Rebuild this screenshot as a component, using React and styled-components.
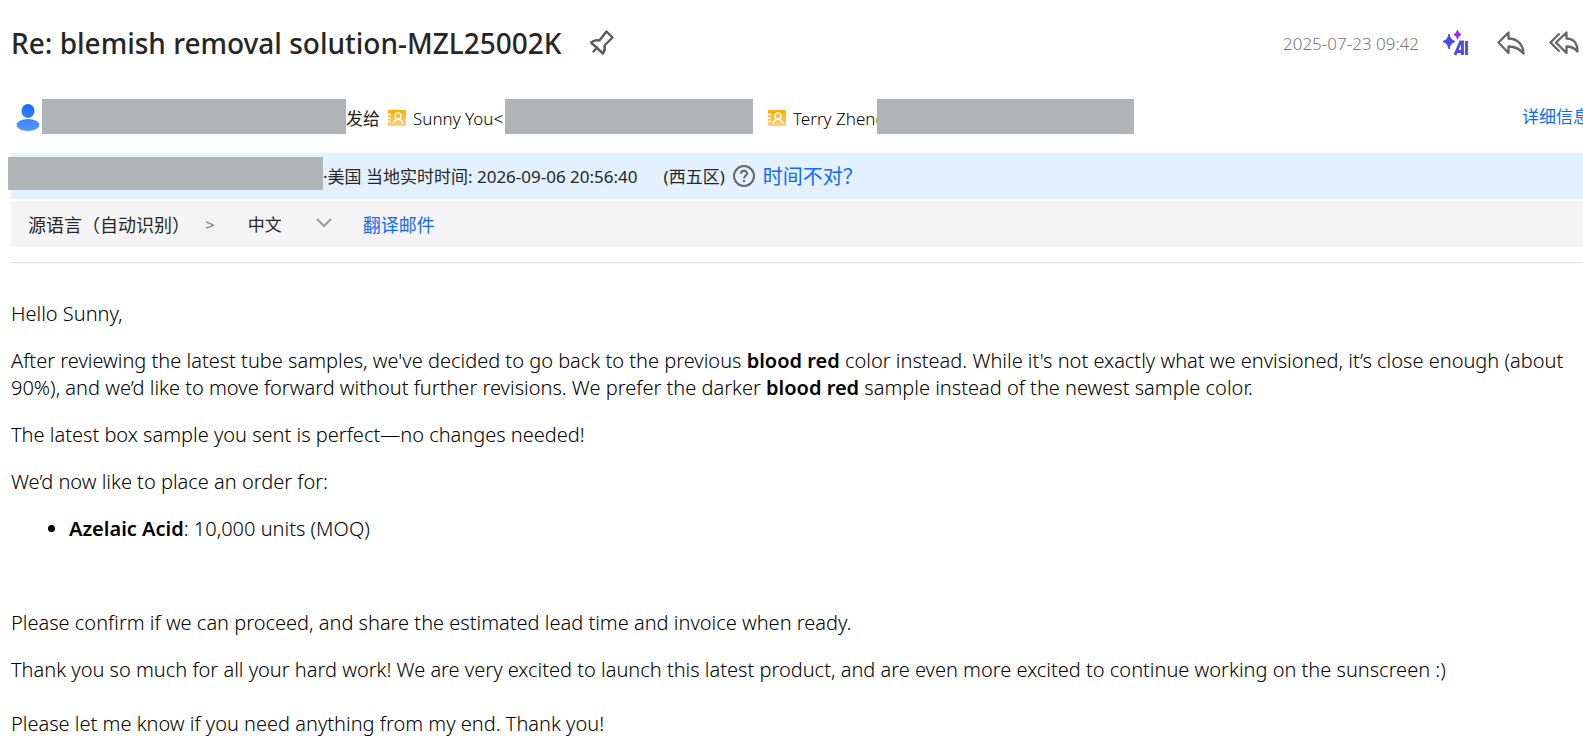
import React, { useState } from "react";
import styled, { createGlobalStyle } from "styled-components";

const App = () => {
    const [language, setLanguage] = useState("zh");

    return (
        <>
            <GlobalStyle />
            <StMail>
                <StHeader>
                    <StTitle>Re: blemish removal solution-MZL25002K</StTitle>
                    <StIconButton aria-label="置顶">
                        <PinIcon />
                    </StIconButton>
                    <StActions>
                        <StDate>2025-07-23 09:42</StDate>
                        <StIconButton aria-label="AI">
                            <AiIcon />
                        </StIconButton>
                        <StIconButton aria-label="回复">
                            <ReplyIcon />
                        </StIconButton>
                        <StIconButton aria-label="回复全部">
                            <ReplyAllIcon />
                        </StIconButton>
                    </StActions>
                </StHeader>

                <StPeople>
                    <PersonIcon />
                    <StHidden $width={304} />
                    <StSentTo>发给</StSentTo>
                    <ContactIcon id="sunny" />
                    <StName $width={90}>Sunny You&lt;</StName>
                    <StHidden $width={248} />
                    <StRecipient>
                        <ContactIcon id="terry" />
                        <StName $width={82}>Terry Zheng</StName>
                        <StHidden $width={257} />
                    </StRecipient>
                    <StDetail href="#detail">详细信息</StDetail>
                </StPeople>

                <StTimeBar>
                    <StHiddenSender />
                    <StTime>·美国 当地实时时间: 2026-09-06 20:56:40</StTime>
                    <StZone>(西五区)</StZone>
                    <HelpIcon />
                    <StTimeLink href="#time">时间不对？</StTimeLink>
                </StTimeBar>

                <StTranslateBar>
                    <StLabel htmlFor="language">源语言（自动识别）</StLabel>
                    <StArrow>&gt;</StArrow>
                    <StSelectBox>
                        <StSelect
                            id="language"
                            value={language}
                            onChange={(e) => {
                                setLanguage(e.target.value);
                            }}
                        >
                            <option value="zh">中文</option>
                            <option value="en">英语</option>
                        </StSelect>
                        <ChevronIcon />
                    </StSelectBox>
                    <StTranslateButton>翻译邮件</StTranslateButton>
                </StTranslateBar>

                <StDivider />

                <StBody>
                    <p>Hello Sunny,</p>
                    <p>
                        After reviewing the latest tube samples, we've decided to go back to the previous{" "}
                        <strong>blood red</strong> color instead. While it's not exactly what we envisioned, it’s
                        close enough (about 90%), and we’d like to move forward without further revisions. We prefer
                        the darker <strong>blood red</strong> sample instead of the newest sample color.
                    </p>
                    <p>The latest box sample you sent is perfect—no changes needed!</p>
                    <p>We’d now like to place an order for:</p>
                    <StList>
                        <li>
                            <strong>Azelaic Acid</strong>: 10,000 units (MOQ)
                        </li>
                    </StList>
                    <p>Please confirm if we can proceed, and share the estimated lead time and invoice when ready.</p>
                    <p>
                        Thank you so much for all your hard work! We are very excited to launch this latest product,
                        and are even more excited to continue working on the sunscreen :)
                        <br />
                        <br />
                        Please let me know if you need anything from my end. Thank you!
                    </p>
                </StBody>
            </StMail>
        </>
    );
};

export default App;

const PinIcon = () => (
    <svg width="26" height="28" viewBox="0 0 26 28" fill="none" stroke="#5c5c5c" strokeWidth="2.400" strokeLinejoin="round">
        <path d="M17.500 2.500 L23.500 8.500 L15.500 16.500 Q16.500 21 14 24.500 L2 13.500 Q5 10.500 10.500 11.500 Z" />
        <path d="M8 18.500 L4.500 22.500" strokeLinecap="round" />
    </svg>
);

const AiIcon = () => (
    <svg width="26" height="26" viewBox="0 0 26 26" fill="none">
        <path d="M6 4 Q7 10 12 11.500 Q7 13 6 19 Q5 13 0 11.500 Q5 10 6 4 Z" fill="#4a48ee" stroke="#4a48ee" />
        <path d="M14.500 0 Q15 4 18 4.500 Q15 5 14.500 9 Q14 5 11 4.500 Q14 4 14.500 0 Z" fill="#a21cf5" stroke="#a21cf5" />
        <path d="M12 25 L17.500 12 H19.500 V25 M14 21.500 H19 M23.500 11 V25" stroke="#4a48ee" strokeWidth="2.800" />
    </svg>
);

const ReplyIcon = () => (
    <svg width="28" height="24" viewBox="0 0 28 24" fill="none" stroke="#666" strokeWidth="2.300" strokeLinejoin="round">
        <path d="M11.500 1.500 V7.500 C20 7.500 26 13 26.500 22.500 C22.500 17.500 18 15.500 11.500 15.500 V22 L1.500 11.500 Z" />
    </svg>
);

const ReplyAllIcon = () => (
    <svg width="30" height="24" viewBox="0 0 30 24" fill="none" stroke="#666" strokeWidth="2.300" strokeLinejoin="round">
        <path d="M17.500 1.500 V7.500 C24 7.500 28.500 12 28.500 20.500 C25.500 17 22 15.500 17.500 15.500 V22 L7 11.500 Z" />
        <path d="M10.500 2.500 L1.500 11.500 L10.500 20.500" />
    </svg>
);

const PersonIcon = () => (
    <svg width="24" height="28" viewBox="0 0 24 28">
        <defs>
            <linearGradient id="person" x1="0" y1="0" x2="0" y2="28" gradientUnits="userSpaceOnUse">
                <stop stopColor="#0e69ff" />
                <stop offset="1" stopColor="#5798ff" />
            </linearGradient>
        </defs>
        <ellipse cx="12" cy="8" rx="6.500" ry="7" fill="url(#person)" />
        <ellipse cx="12" cy="22" rx="11.500" ry="6" fill="url(#person)" />
    </svg>
);

const ContactIcon = ({ id }) => (
    <svg width="19" height="18" viewBox="0 0 19 18" fill="none">
        <defs>
            <linearGradient id={id} x1="0" y1="2" x2="0" y2="18" gradientUnits="userSpaceOnUse">
                <stop stopColor="#ffab00" />
                <stop offset="1" stopColor="#ffd27a" />
            </linearGradient>
        </defs>
        <rect x="1" y="2" width="18" height="16" rx="1" fill={`url(#${id})`} />
        <path d="M0 6.500 H4 M0 10 H4 M0 13.500 H4" stroke="#fff" strokeWidth="1.400" />
        <circle cx="11" cy="8" r="3" stroke="#fff" strokeWidth="1.300" />
        <path d="M6 15.500 Q7 12 11 11 Q15 12 16 15.500" stroke="#fff" strokeWidth="1.300" />
    </svg>
);

const HelpIcon = () => (
    <svg width="22" height="24" viewBox="0 0 22 24" fill="none" stroke="#666" strokeWidth="2">
        <circle cx="11" cy="11" r="10" />
        <path d="M8 8.800 C8 4.800 14 4.800 14 8.500 C14 10.800 11 10.800 11 13.500" />
        <path d="M11 15 V17" />
    </svg>
);

const ChevronIcon = () => (
    <svg width="16" height="14" viewBox="0 0 16 14" fill="none" stroke="#999" strokeWidth="2">
        <path d="M1 1 L8 8 L15 1" />
    </svg>
);

const GlobalStyle = createGlobalStyle`
  * {
    box-sizing: border-box;
  }

  body {
    margin: 0;
    overflow-x: hidden;
    background-color: #fff;
    color: #262626;
    font-family: "Noto Sans", "Noto Sans CJK SC", sans-serif;
    font-size: 17px;
    line-height: 24px;
  }

  svg {
    display: block;
    flex-shrink: 0;
  }

  a {
    color: #0f69ff;
    text-decoration: none;
  }
`;

const StMail = styled.div`
  padding-left: 11px;
  overflow-x: hidden;
`;

const StHeader = styled.header`
  display: flex;
  align-items: center;
  padding: 23px 4px 0 0;
`;

const StTitle = styled.h1`
  margin: 0 28px 0 0;
  font-size: 28px;
  font-weight: 500;
  line-height: 40px;
  white-space: nowrap;
`;

const StActions = styled.div`
  display: flex;
  align-items: center;
  margin-left: auto;

  button {
    margin-left: 24px;
  }

  button + button {
    margin-left: 28px;
  }

  button:last-child {
    margin-left: 24px;
  }
`;

const StDate = styled.time`
  padding-top: 2px;
  color: #777;
  font-weight: 300;
`;

const StIconButton = styled.button`
  padding: 0;
  border: none;
  background: none;
  cursor: pointer;
`;

const StPeople = styled.div`
  display: flex;
  align-items: center;
  margin: 36px -7px 0 0;
  padding-left: 5px;
  white-space: nowrap;
`;

const StHidden = styled.span`
  flex-shrink: 0;
  width: ${({ $width }) => $width}px;
  height: 35px;
  margin-left: 2px;
  background-color: #b0b4b7;
`;

const StHiddenSender = styled(StHidden)`
  align-self: flex-start;
  width: 315px;
  height: 33px;
  margin: 2px 0 0 -3px;
`;

const StSentTo = styled.span`
  margin-right: 7px;
  padding-top: 4px;
`;

const StName = styled.span`
  width: ${({ $width }) => $width}px;
  margin-left: 7px;
  padding-top: 4px;
  color: #000;
  font-weight: 300;
`;

const StRecipient = styled.span`
  display: flex;
  align-items: center;
  margin-left: 14px;
`;

const StDetail = styled.a`
  margin-left: auto;
`;

const StTimeBar = styled.div`
  display: flex;
  align-items: center;
  height: 46px;
  margin-top: 19px;
  padding-top: 2px;
  background-color: #e3f1ff;
  white-space: nowrap;
`;

const StTime = styled.span`
  margin-right: 26px;
`;

const StZone = styled.span`
  margin-right: 8px;
`;

const StTimeLink = styled.a`
  margin-left: 8px;
  font-size: 20px;
`;

const StTranslateBar = styled.div`
  display: flex;
  align-items: center;
  height: 46px;
  margin-top: 2px;
  padding: 2px 0 0 17px;
  background-color: #f4f4f4;
`;

const StLabel = styled.label`
  font-size: 18px;
`;

const StArrow = styled.span`
  margin: 0 33px 0 15px;
  color: #808080;
`;

const StSelectBox = styled.span`
  display: flex;
  align-items: center;
  margin-right: 31px;
`;

const StSelect = styled.select`
  appearance: none;
  width: 68px;
  padding: 0;
  border: none;
  background: none;
  color: inherit;
  font: inherit;
`;

const StTranslateButton = styled.button`
  padding: 0;
  border: none;
  background: none;
  color: #0f69ff;
  font: inherit;
  font-size: 18px;
  cursor: pointer;
`;

const StDivider = styled.hr`
  margin: 15px 0 0;
  border: none;
  border-top: 1px solid #ddd;
`;

const StBody = styled.article`
  padding: 37px 8px 8px 0;
  color: #000;
  font-size: 20px;
  font-weight: 300;
  line-height: 27px;

  p {
    margin: 0 0 20px;
  }

  strong {
    color: #000;
    font-weight: 600;
  }
`;

const StList = styled.ul`
  margin: 0 0 67px;
  padding-left: 58px;
`;
